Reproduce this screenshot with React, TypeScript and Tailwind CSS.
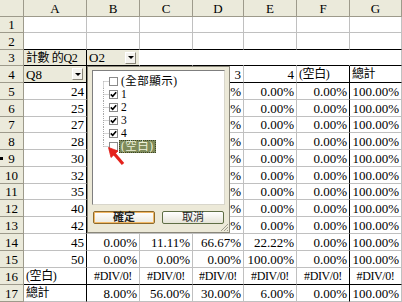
import React from 'react';

// one row of the sheet: A..G
type Cell = {
  t?: string;
  a?: 'l' | 'r' | 'c';
  btn?: boolean; // pivot field dropdown
  gray?: boolean; // pivot field button background
  rb?: 'd' | 'n'; // right border: dark / none
  bb?: 'd'; // bottom border dark
  sm?: boolean; // cjk / error text, a bit smaller
};

const COLS = ['A', 'B', 'C', 'D', 'E', 'F', 'G'];

const empty = (): Cell[] => COLS.map(() => ({}));

// B and C of rows 4-13 sit under the filter popup, so they are left blank
const dataRow = (label: string, d: string, e: string, b = '', c = ''): Cell[] => [
  { t: label, a: 'r', rb: 'd' },
  { t: b, a: 'r' },
  { t: c, a: 'r' },
  { t: d, a: 'r' },
  { t: e, a: 'r' },
  { t: '0.00%', a: 'r', rb: 'd' },
  { t: '100.00%', a: 'r' },
];

const div0 = (extra: Partial<Cell> = {}): Cell => ({ t: '#DIV/0!', a: 'c', bb: 'd', sm: true, ...extra });

const ROWS: Cell[][] = [
  empty(),
  COLS.map(() => ({ bb: 'd' as const })),
  [
    { t: '計數 的Q2', gray: true, rb: 'd', bb: 'd', sm: true },
    { t: 'O2', gray: true, btn: true, rb: 'n', bb: 'd' },
    { rb: 'n', bb: 'd' },
    { rb: 'n', bb: 'd' },
    { rb: 'n', bb: 'd' },
    { rb: 'n', bb: 'd' },
    { bb: 'd' },
  ],
  [
    { t: 'Q8', gray: true, btn: true, rb: 'd', bb: 'd' },
    { bb: 'd' },
    { bb: 'd' },
    { t: '3', a: 'r', bb: 'd' },
    { t: '4', a: 'r', bb: 'd' },
    { t: '(空白)', rb: 'd', bb: 'd', sm: true },
    { t: '總計', bb: 'd', sm: true },
  ],
  dataRow('24', '0.00%', '0.00%'),
  dataRow('25', '0.00%', '0.00%'),
  dataRow('27', '100.00%', '0.00%'),
  dataRow('28', '0.00%', '0.00%'),
  dataRow('30', '0.00%', '0.00%'),
  dataRow('32', '100.00%', '0.00%'),
  dataRow('35', '0.00%', '0.00%'),
  dataRow('40', '0.00%', '0.00%'),
  dataRow('42', '0.00%', '0.00%'),
  dataRow('45', '66.67%', '22.22%', '0.00%', '11.11%'),
  dataRow('50', '0.00%', '100.00%', '0.00%', '0.00%'),
  [
    { t: '(空白)', rb: 'd', bb: 'd', sm: true },
    div0(),
    div0(),
    div0(),
    div0(),
    div0({ rb: 'd' }),
    div0(),
  ],
  [
    { t: '總計', rb: 'd', sm: true },
    { t: '8.00%', a: 'r' },
    { t: '56.00%', a: 'r' },
    { t: '30.00%', a: 'r' },
    { t: '6.00%', a: 'r' },
    { t: '0.00%', a: 'r', rb: 'd' },
    { t: '100.00%', a: 'r' },
  ],
];

const ITEMS = [
  { l: '(全部顯示)', c: false },
  { l: '1', c: true },
  { l: '2', c: true },
  { l: '3', c: true },
  { l: '4', c: true },
  { l: '(空白)', c: false, sel: true },
];

const DropBtn = () => (
  <span className="mr-[1px] flex h-[12px] w-[11px] shrink-0 items-center justify-center border border-t-white border-l-white border-r-[#8a877a] border-b-[#8a877a] bg-[#f4f3ee]">
    <span className="h-0 w-0 border-x-[3px] border-t-[3px] border-x-transparent border-t-black" />
  </span>
);

const SheetCell = ({ cell }: { cell: Cell }) => {
  const right = cell.rb === 'd' ? 'border-r-black' : cell.rb === 'n' ? 'border-r-white' : 'border-r-[#c0c0c0]';
  const bottom = cell.bb === 'd' ? 'border-b-black' : 'border-b-[#c0c0c0]';
  const justify = cell.btn
    ? 'justify-between'
    : cell.a === 'r'
      ? 'justify-end'
      : cell.a === 'c'
        ? 'justify-center'
        : 'justify-start';
  const bg = cell.gray ? 'bg-[#ebeadb]' : 'bg-white';
  return (
    <div className={`flex items-center overflow-hidden whitespace-nowrap border-r border-b pl-[2px] pr-[2px] ${right} ${bottom} ${justify} ${bg}`}>
      {cell.t && <span className={cell.sm ? 'text-[12px] tracking-[-0.4px]' : ''}>{cell.t}</span>}
      {cell.btn && <DropBtn />}
    </div>
  );
};

const Connector = ({ first, last }: { first: boolean; last: boolean }) => (
  <svg width="16" height="13" className="shrink-0" stroke="#a8a8a8" strokeWidth="1" strokeDasharray="1 1">
    <line x1="10.5" y1={first ? 6.5 : 0} x2="10.5" y2={last ? 6.5 : 13} />
    <line x1="10.5" y1="6.5" x2="16" y2="6.5" />
  </svg>
);

const FilterPopup = () => (
  <div className="absolute left-[87px] top-[66px] flex h-[167px] w-[143px] flex-col border border-[#8a877a] bg-[#ece9d8] pl-[4px] pr-[4px] pt-[3px]">
    <div className="h-[135px] border border-[#7f7f7f] border-r-[#d8d6cb] border-b-[#d8d6cb] bg-white pt-[4px] text-[11.5px] tracking-[0.5px]">
      {ITEMS.map((it, i) => (
        <div key={it.l} className="flex h-[13px] items-center">
          <Connector first={i === 0} last={i === ITEMS.length - 1} />
          <span className="flex h-[9px] w-[9px] shrink-0 items-center justify-center border border-[#8a8a8a] bg-white">
            {it.c && (
              <svg width="7" height="7" viewBox="0 0 7 7" fill="none" stroke="black" strokeWidth="1.6">
                <path d="M0.8 3.4 L2.7 5.3 L6.2 1.2" />
              </svg>
            )}
          </span>
          <span
            className={
              it.sel
                ? 'ml-[1px] flex h-[13px] items-center bg-[#7d8a5a] px-[2px] text-[#eef2da] outline-1 outline-dotted outline-[#3d4526] -outline-offset-1'
                : 'ml-[1px] px-[2px]'
            }
          >
            {it.l}
          </span>
        </div>
      ))}
    </div>
    <div className="mt-[6px] flex gap-[7px] pl-[1px] text-[11px]">
      <button className="flex h-[13px] w-[62px] items-center justify-center rounded-[2px] border border-[#8d6a2b] bg-linear-to-b from-white to-[#eceae0] font-bold text-[#222] shadow-[inset_0_0_0_1px_#f2b866]">
        確定
      </button>
      <button className="flex h-[13px] w-[62px] items-center justify-center rounded-[2px] border border-[#5f6e45] bg-linear-to-b from-white to-[#e6e4d8] text-[#222]">
        取消
      </button>
    </div>
    <svg width="7" height="7" className="absolute bottom-[1px] right-[1px]" stroke="#a09d8f" strokeWidth="1">
      <line x1="7" y1="0" x2="0" y2="7" />
      <line x1="7" y1="3" x2="3" y2="7" />
      <line x1="7" y1="6" x2="6" y2="7" />
    </svg>
  </div>
);

export default function App() {
  return (
    <div className="relative h-[302px] w-[402px] overflow-hidden bg-white font-['Liberation_Serif','Noto_Sans_CJK_TC',serif] text-[13px] leading-none text-black">
      <div className="grid grid-cols-[24px_63px_53px_53px_51px_53px_53px_52px] grid-rows-[17px_16px_17px_16px_17px_17px_17px_16px_17px_17px_17px_16px_17px_17px_17px_17px_17px_17px]">
        <div className="border-r border-b border-[#9d9a8b] bg-[#ebeadb]" />
        {COLS.map((c) => (
          <div key={c} className="flex items-center justify-center border-r border-b border-[#9d9a8b] bg-[#ebeadb]">
            {c}
          </div>
        ))}
        {ROWS.map((row, i) => (
          <React.Fragment key={i}>
            <div className="relative flex items-center justify-center border-r border-b border-[#9d9a8b] bg-[#ebeadb]">
              {i === 8 && <span className="absolute left-0 top-[7px] h-[3px] w-[3px] bg-black" />}
              {i + 1}
            </div>
            {row.map((cell, j) => (
              <SheetCell key={j} cell={cell} />
            ))}
          </React.Fragment>
        ))}
      </div>
      <FilterPopup />
      <svg width="24" height="24" className="absolute left-[104px] top-[143px]" fill="#e4221c" stroke="#e4221c">
        <polygon points="4.5,4.5 14,8 7,14.5" strokeWidth="0.8" strokeLinejoin="round" />
        <line x1="10" y1="10.5" x2="19" y2="21" strokeWidth="3.2" />
      </svg>
    </div>
  );
}
